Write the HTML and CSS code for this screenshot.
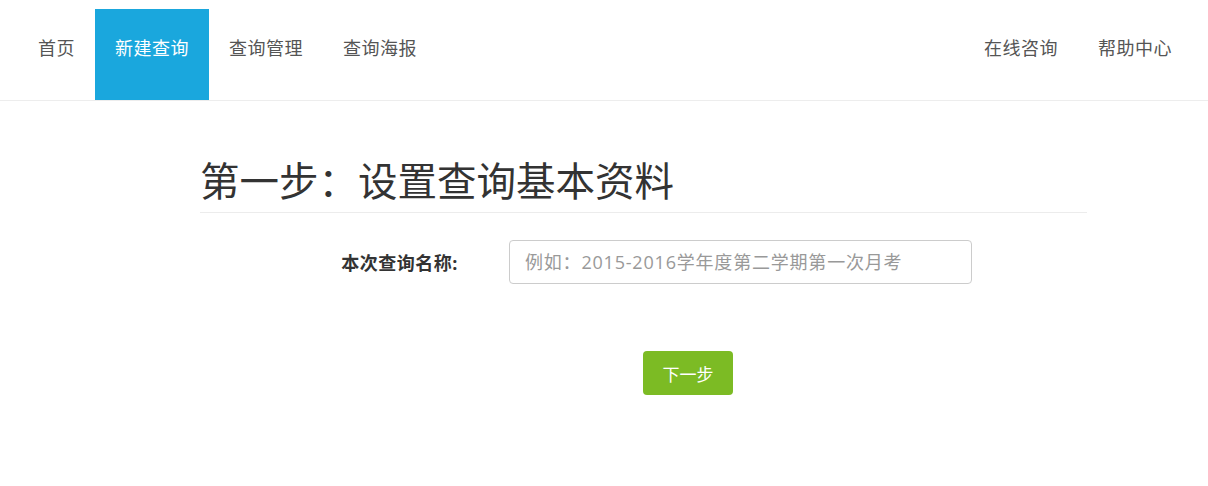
FILE: index.html
```html
<!DOCTYPE html>
<html lang="zh-CN">
<head>
    <meta charset="UTF-8">
    <meta name="viewport" content="width=device-width, initial-scale=1.0">
    <title>新建查询</title>
    <link rel="stylesheet" href="styles.css">
</head>
<body>

    <div class="navbar">
        <ul class="nav">
            <li><a href="#">首页</a></li>
            <li class="active"><a href="#">新建查询</a></li>
            <li><a href="#">查询管理</a></li>
            <li><a href="#">查询海报</a></li>
        </ul>
        <ul class="nav">
            <li><a href="#">在线咨询</a></li>
            <li><a href="#">帮助中心</a></li>
        </ul>
    </div>

    <div class="container">
        <h1 class="page-title">第一步：设置查询基本资料</h1>

        <form class="step-form">
            <div class="form-row">
                <label for="query-name">本次查询名称:</label>
                <input type="text" id="query-name" placeholder="例如：2015-2016学年度第二学期第一次月考">
            </div>

            <div class="form-actions">
                <button type="button" class="btn-next">下一步</button>
            </div>
        </form>
    </div>

</body>
</html>
```

FILE: styles.css
```css
* {
    margin: 0;
    padding: 0;
    box-sizing: border-box;
    font-family: "Open Sans", "Noto Sans CJK SC", sans-serif;
}

body {
    background: #fff;
    color: #333;
}

.navbar {
    display: flex;
    justify-content: space-between;
    height: 101px;
    padding: 9px 16px 0 18px;
    border-bottom: 1px solid #ededed;
}

.nav {
    display: flex;
    list-style: none;
}

.nav a {
    display: block;
    height: 91px;
    padding: 25px 20px 0;
    font-size: 18px;
    letter-spacing: 0.5px;
    color: #555;
    text-decoration: none;
}

.nav .active a {
    background: #1aa7dd;
    color: #fff;
}

.container {
    width: 887px;
    margin-left: 200px;
}

.page-title {
    margin-top: 49px;
    padding-bottom: 4px;
    font-size: 39.5px;
    font-weight: normal;
    color: #333;
    border-bottom: 1px solid #ececec;
}

.form-row {
    display: flex;
    align-items: center;
    margin-top: 27px;
}

.form-row label {
    width: 258px;
    text-align: right;
    font-size: 18px;
    font-weight: bold;
    letter-spacing: 0.5px;
    color: #333;
}

.form-row input {
    width: 463px;
    height: 44px;
    margin-left: 51px;
    padding: 0 15px;
    font-size: 18px;
    letter-spacing: 0.8px;
    border: 1px solid #ccc;
    border-radius: 4px;
    color: #555;
}

.form-row input::placeholder {
    color: #999;
}

.form-actions {
    margin-top: 67px;
    padding-left: 443px;
}

.btn-next {
    width: 90px;
    height: 44px;
    font-size: 17px;
    color: #fff;
    background: #7cbb24;
    border: none;
    border-radius: 4px;
    cursor: pointer;
}

.btn-next:hover {
    background: #6aa41b;
}
```
